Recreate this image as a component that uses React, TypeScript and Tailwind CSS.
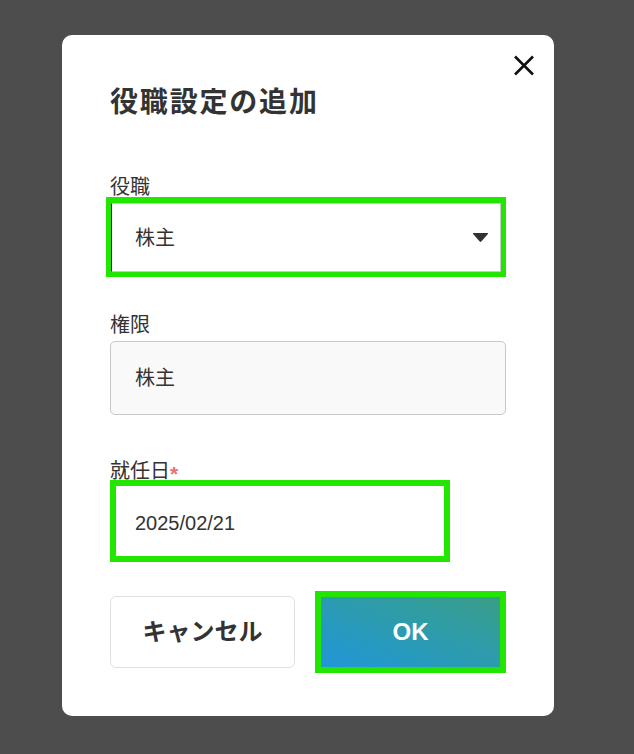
import * as React from "react";

const font = { fontFamily: '"Liberation Sans", "Noto Sans CJK JP", sans-serif' };

function CloseIcon() {
  return (
    <svg width="22" height="21" viewBox="0 0 22 21" fill="none">
      <path d="M2 1.5 L20 19.5 M20 1.5 L2 19.5" stroke="#111" strokeWidth="2.6" strokeLinecap="butt" />
    </svg>
  );
}

function CaretDown() {
  return (
    <svg width="17" height="11" viewBox="0 0 17 11">
      <path d="M1.5 1 H15.5 Q16.6 1 15.9 2 L9.3 9.6 Q8.5 10.4 7.7 9.6 L1.1 2 Q0.4 1 1.5 1 Z" fill="#333" />
    </svg>
  );
}

export default function App() {
  return (
    <div className="min-h-[754px] w-full bg-[#4d4d4d] pt-[35px] pl-[62px]" style={font}>
      <div className="relative flex h-[681px] w-[492px] flex-col rounded-[10px] bg-white px-[48px]">
        <button className="absolute right-[19px] top-[20px] flex items-center justify-center">
          <CloseIcon />
        </button>

        <h2 className="mt-[51px] text-[28px] font-bold leading-[34px] tracking-[0.065em] text-[#333]">
          役職設定の追加
        </h2>

        {/* 役職 */}
        <label className="mt-[55px] h-[24px] text-[20px] leading-[24px] text-[#333]">役職</label>
        <div className="-ml-[4px] -mt-[2px] h-[80px] w-[400px] border-[#22e600] border-l-[5px] border-r-[5px] border-t-[6px] border-b-[5px]">
          <div className="flex h-full w-full items-center justify-between border border-[#c8c8c8] border-l-[#222] bg-white pl-[23px] pr-[11px]">
            <span className="text-[20px] text-[#333]">株主</span>
            <CaretDown />
          </div>
        </div>

        {/* 権限 */}
        <label className="mt-[37px] h-[22px] text-[20px] leading-[22px] text-[#333]">権限</label>
        <div className="mt-[5px] flex h-[74px] w-[396px] items-center rounded-[5px] border border-[#c8c8c8] bg-[#f9f9f9] pl-[24px]">
          <span className="text-[20px] text-[#333]">株主</span>
        </div>

        {/* 就任日 */}
        <label className="mt-[45px] flex h-[22px] items-start text-[20px] leading-[22px] text-[#333]">
          <span>就任日</span>
          <span className="mt-[3px] text-[21px] font-bold leading-none text-[#e87070]">*</span>
        </label>
        <div className="-mt-[2px] flex h-[82px] w-[340px] items-center border-[6px] border-[#22e600] bg-white pl-[19px] pt-[3px]">
          <span className="text-[20px] text-[#333]">2025/02/21</span>
        </div>

        {/* buttons */}
        <div className="mt-[29px] flex h-[82px] items-center gap-[20px]">
          <button className="h-[72px] w-[186px] rounded-[6px] border border-[#e0e0e0] bg-white text-[24px] font-bold text-[#333]">
            キャンセル
          </button>
          <div className="h-[82px] w-[192px] border-[6px] border-[#22e600]">
            <button className="h-full w-full bg-gradient-to-tr from-[#2196d8] to-[#3a9e86] text-[24px] font-bold text-white">
              OK
            </button>
          </div>
        </div>
      </div>
    </div>
  );
}
